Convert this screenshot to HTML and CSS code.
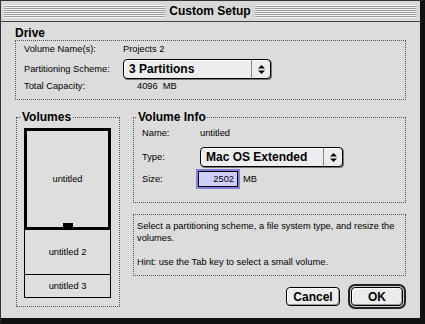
FILE: index.html
```html
<!DOCTYPE html>
<html lang="en">
<head>
    <meta charset="UTF-8">
    <title>Custom Setup</title>
    <link rel="stylesheet" href="styles.css">
</head>
<body>
    <div class="window">
        <div class="titlebar">
            <span class="stripes"></span>
            <span class="title">Custom Setup</span>
            <span class="stripes"></span>
        </div>

        <div class="content">
            <h2 class="heading">Drive</h2>
            <div class="group drive">
                <div class="row r1">
                    <span class="label">Volume Name(s):</span>
                    <span class="value">Projects 2</span>
                </div>
                <div class="row r2">
                    <span class="label">Partitioning Scheme:</span>
                    <div class="popup scheme">
                        <span class="popup-text">3 Partitions</span>
                        <span class="arrows">
                            <svg width="7" height="9" viewBox="0 0 7 9"><path d="M3.5 0L7 3.5H0Z M0 5.5H7L3.5 9Z" fill="#000"/></svg>
                        </span>
                    </div>
                </div>
                <div class="row r3">
                    <span class="label">Total Capacity:</span>
                    <span class="value cap">4096&nbsp; MB</span>
                </div>
            </div>

            <div class="lower">
                <fieldset class="group volumes">
                    <legend>Volumes</legend>
                    <div class="stack">
                        <div class="vol selected">untitled<span class="handle"></span></div>
                        <div class="vol v2">untitled 2</div>
                        <div class="vol v3">untitled 3</div>
                    </div>
                </fieldset>

                <div class="side">
                    <fieldset class="group info">
                        <legend>Volume Info</legend>
                        <div class="row i1">
                            <span class="label short">Name:</span>
                            <span class="value">untitled</span>
                        </div>
                        <div class="row i2">
                            <span class="label short">Type:</span>
                            <div class="popup fstype">
                                <span class="popup-text">Mac OS Extended</span>
                                <span class="arrows">
                                    <svg width="7" height="9" viewBox="0 0 7 9"><path d="M3.5 0L7 3.5H0Z M0 5.5H7L3.5 9Z" fill="#000"/></svg>
                                </span>
                            </div>
                        </div>
                        <div class="row i3">
                            <span class="label short">Size:</span>
                            <span class="field">2502</span>
                            <span class="unit">MB</span>
                        </div>
                    </fieldset>

                    <div class="group hint">
                        <p>Select a partitioning scheme, a file system type, and resize the volumes.</p>
                        <p>Hint: use the Tab key to select a small volume.</p>
                    </div>

                    <div class="buttons">
                        <button class="btn cancel">Cancel</button>
                        <span class="ring"><button class="btn ok">OK</button></span>
                    </div>
                </div>
            </div>
        </div>
    </div>
</body>
</html>
```

FILE: styles.css
```css
body {
    margin: 0;
    background: #fff;
    font-family: "Liberation Sans", Arial, sans-serif;
    font-size: 9.3px;
    color: #000;
}
.window {
    box-sizing: border-box;
    width: 425px;
    height: 324px;
    background: #dcdcdc;
    border: 1px solid #333;
    border-right: 5px solid #111;
    border-bottom: 6px solid #111;
}
.titlebar {
    height: 20px;
    display: flex;
    align-items: center;
    gap: 4px;
    padding: 0 4px 0 3px;
    border-bottom: 1px solid #444;
    background: #d8d8d8;
}
.stripes {
    flex: 1;
    height: 13px;
    background: repeating-linear-gradient(#f4f4f4 0 1px, #9a9a9a 1px 2px);
}
.title {
    font-weight: bold;
    font-size: 12px;
}
.content {
    padding: 4px 14px 0 14px;
}
.heading {
    margin: 0;
    font-size: 12px;
    line-height: 14px;
    font-weight: bold;
}
.group {
    border: 1px dotted #555;
    margin: 0;
}
.drive {
    padding: 1px 8px 6px 8px;
    display: flex;
    flex-direction: column;
}
.row {
    display: flex;
    align-items: center;
    height: 14px;
}
.drive .r2 {
    height: 20px;
    margin-top: 3px;
}
.label {
    width: 99px;
    flex-shrink: 0;
}
.label.short {
    width: 58px;
}
.cap {
    padding-left: 14px;
}
.popup {
    box-sizing: border-box;
    height: 20px;
    display: flex;
    align-items: center;
    border: 1px solid #000;
    border-radius: 4px;
    background: #ededed;
    box-shadow: 1px 1px 0 #777, inset 1px 1px 0 #fff;
}
.popup.scheme { width: 148px; }
.popup.fstype { width: 143px; }
.popup-text {
    flex: 1;
    padding-left: 5px;
    font-weight: bold;
    font-size: 12px;
}
.arrows {
    width: 18px;
    height: 18px;
    display: flex;
    align-items: center;
    justify-content: center;
    border-left: 1px solid #888;
}
.lower {
    display: flex;
    gap: 13px;
    margin-top: 10px;
}
fieldset.group legend {
    font-size: 12px;
    font-weight: bold;
    line-height: 14px;
    padding: 0 1px;
}
.volumes legend { margin-left: -3px; }
.info legend { margin-left: -5px; }
.volumes {
    box-sizing: border-box;
    width: 104px;
    height: 197px;
    margin-left: 1px;
    padding: 4px 8px 9px 7px;
}
.stack {
    display: flex;
    flex-direction: column;
}
.vol {
    box-sizing: border-box;
    display: flex;
    align-items: center;
    justify-content: center;
    border: 1px solid #000;
    border-top: none;
    background: #dedede;
}
.selected {
    position: relative;
    height: 102px;
    border: 3px solid #000;
}
.handle {
    position: absolute;
    left: 36px;
    bottom: 0;
    width: 10px;
    height: 4px;
    background: #000;
}
.v2 { height: 45px; }
.v3 { height: 23px; }
.side {
    flex: 1;
    display: flex;
    flex-direction: column;
}
.info {
    box-sizing: border-box;
    height: 93px;
    padding: 2px 8px 0 8px;
}
.info .i2 {
    height: 20px;
    margin-top: 7px;
}
.info .i3 {
    height: 19px;
    margin-top: 2px;
}
.field {
    box-sizing: border-box;
    width: 40px;
    height: 16px;
    margin-left: -2px;
    padding-right: 3px;
    text-align: right;
    line-height: 14px;
    border: 1px solid #000;
    background: #cfcfff;
    box-shadow: 0 0 0 2px #8080d8;
}
.unit {
    margin-left: 5px;
}
.hint {
    margin-top: 11px;
    padding: 5px 4px 7px 3px;
    line-height: 12px;
}
.hint p {
    margin: 0 0 12px 0;
}
.hint p:last-child {
    margin-bottom: 0;
}
.buttons {
    display: flex;
    justify-content: flex-end;
    align-items: center;
    gap: 8px;
    margin-top: 8px;
}
.btn {
    font-family: "Liberation Sans", Arial, sans-serif;
    font-size: 12px;
    font-weight: bold;
    height: 19px;
    padding: 0;
    border: 1px solid #000;
    border-radius: 4px;
    background: #ececec;
    box-shadow: inset 1px 1px 0 #fff, inset -1px -1px 0 #999;
}
.cancel { width: 54px; }
.ring {
    display: flex;
    padding: 1px;
    border: 2px solid #222;
    border-radius: 7px;
    background: #cfcfcf;
}
.ok { width: 52px; }
```
